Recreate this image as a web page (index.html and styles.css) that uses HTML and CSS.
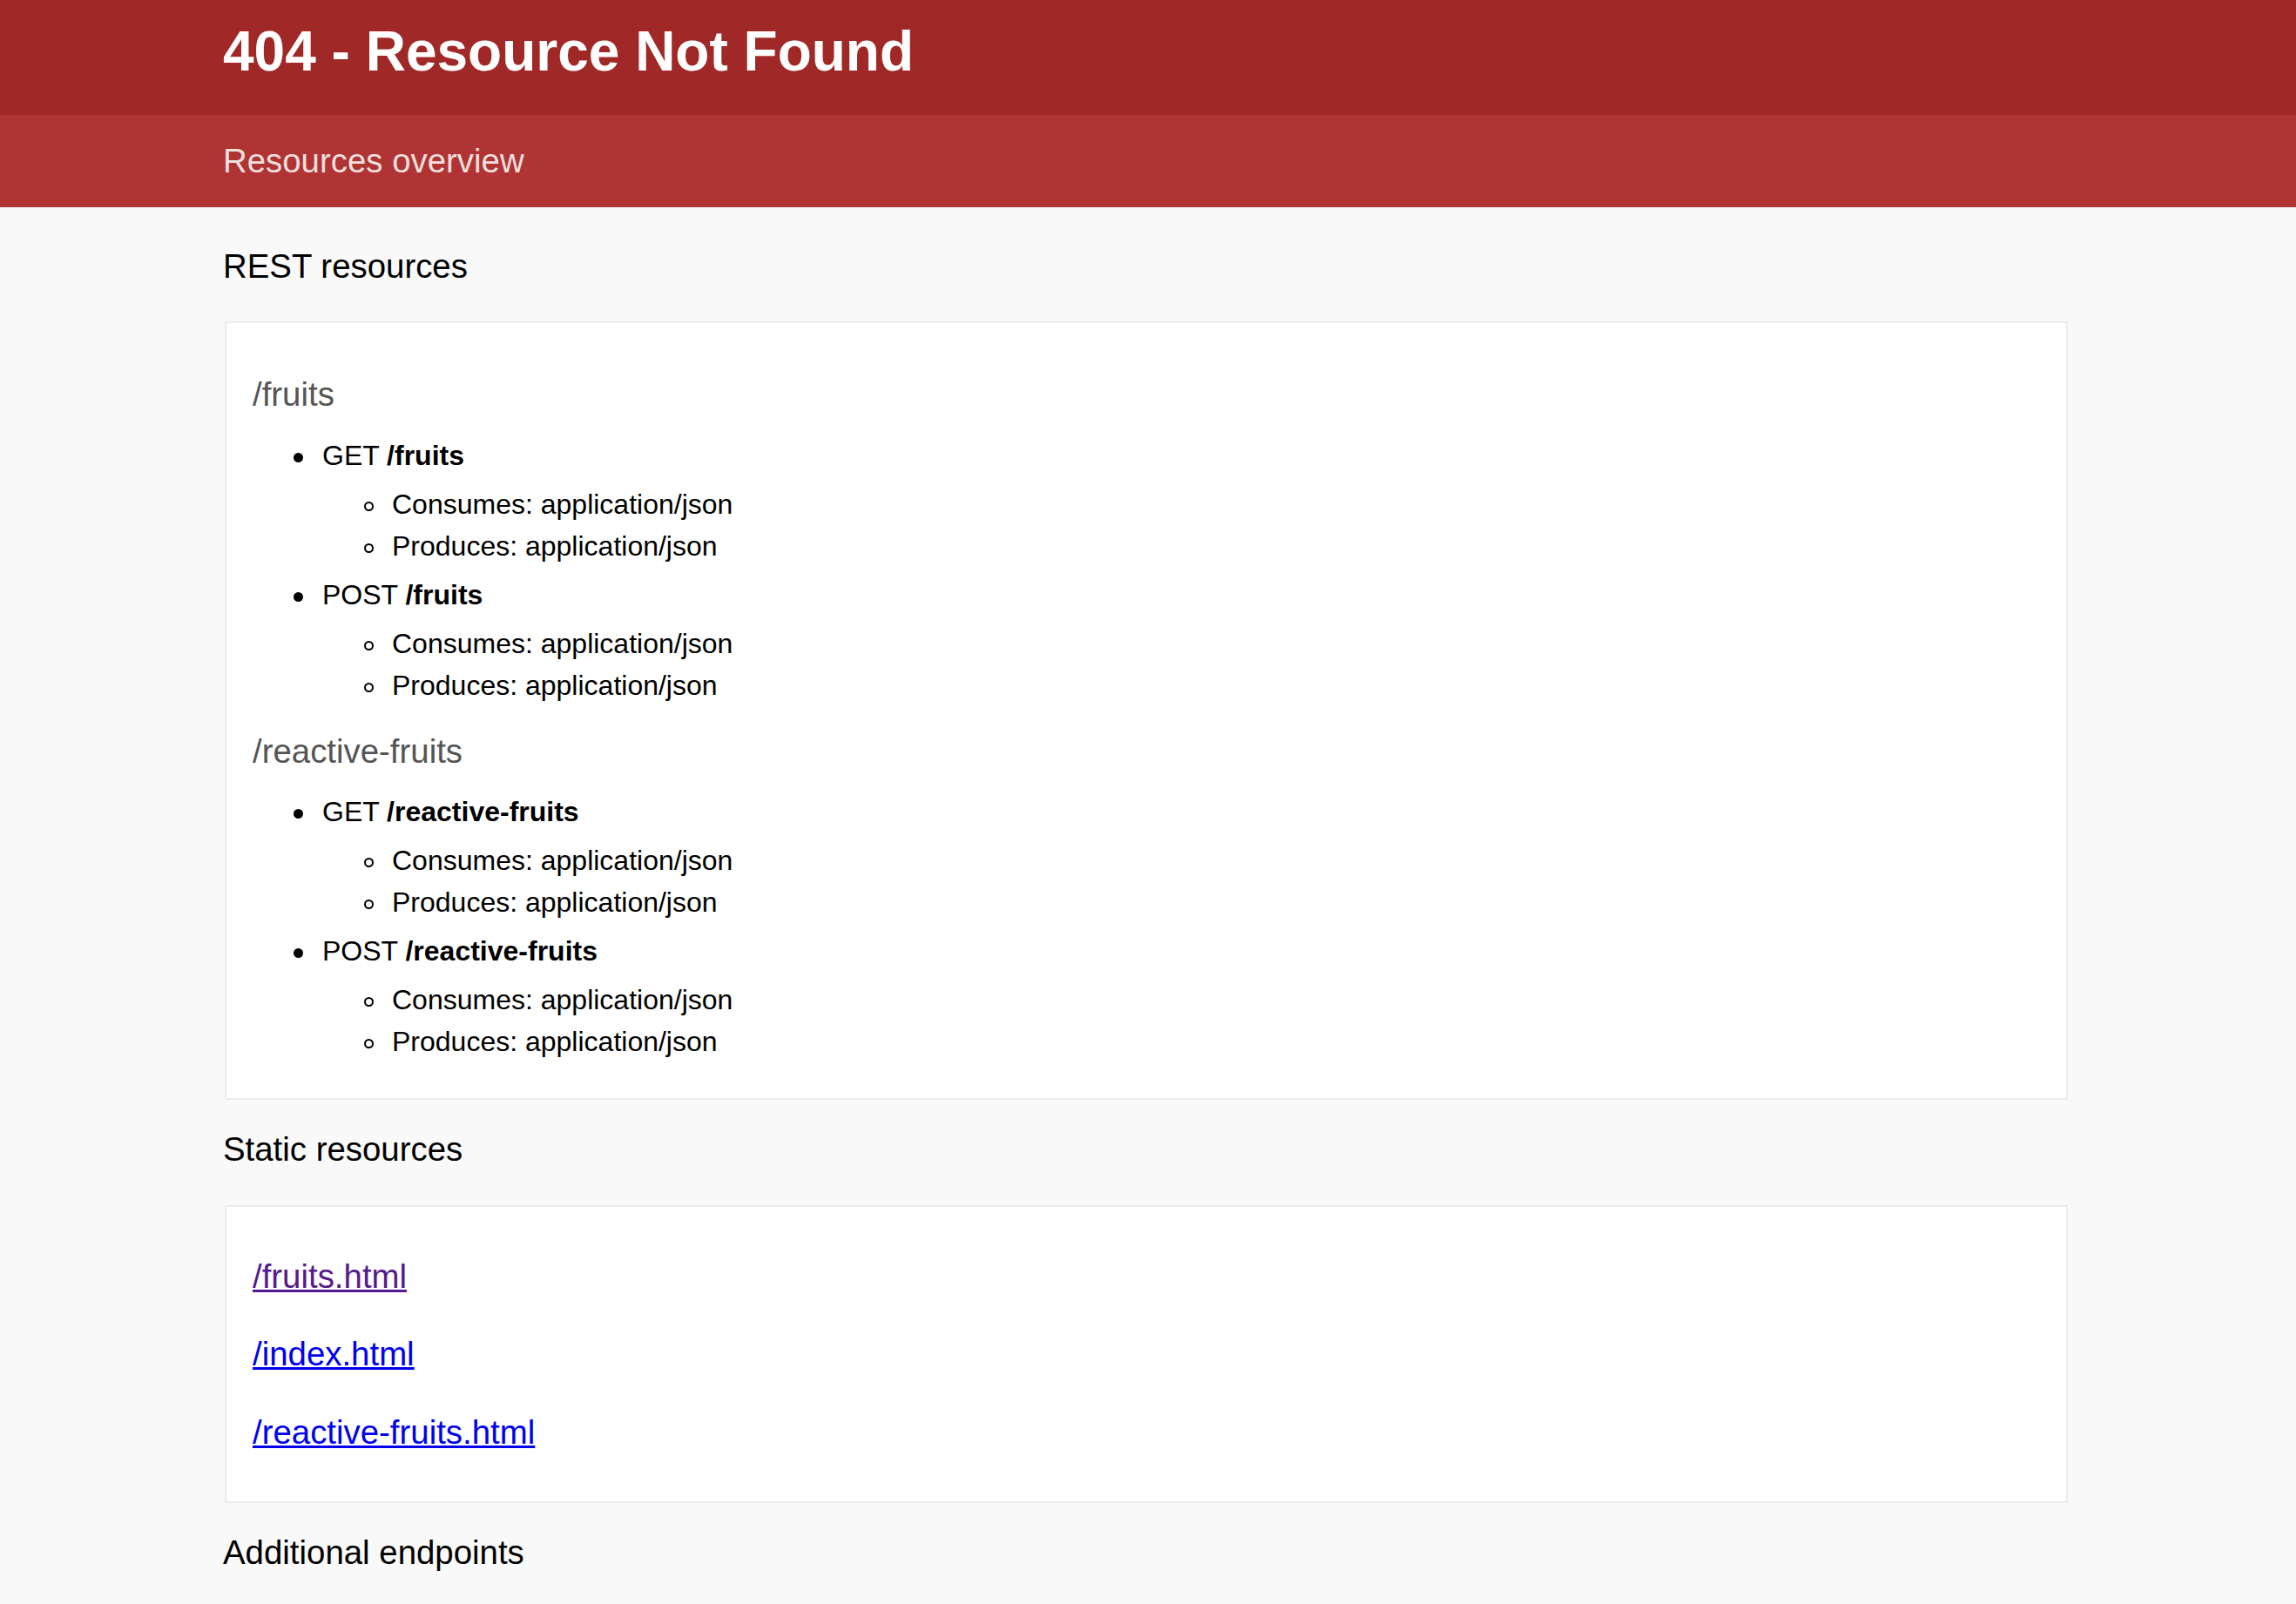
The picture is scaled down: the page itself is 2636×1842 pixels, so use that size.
FILE: index.html
```html
<!DOCTYPE html>
<html lang="en">
<head>
<meta charset="utf-8">
<title>404 - Resource Not Found</title>
<link rel="stylesheet" href="styles.css">
</head>
<body>
<header class="header">
  <div class="container">
    <h1 class="title">404 - Resource Not Found</h1>
  </div>
</header>
<div class="subheader">
  <div class="container">
    <h2 class="subtitle">Resources overview</h2>
  </div>
</div>
<main class="container content">
  <div class="section-title">REST resources</div>
  <div class="resources rest">
    <h3 class="res-path">/fruits</h3>
    <ul class="methods">
      <li>GET <strong>/fruits</strong>
        <ul class="media">
          <li>Consumes: application/json</li>
          <li>Produces: application/json</li>
        </ul>
      </li>
      <li>POST <strong>/fruits</strong>
        <ul class="media">
          <li>Consumes: application/json</li>
          <li>Produces: application/json</li>
        </ul>
      </li>
    </ul>
    <h3 class="res-path second">/reactive-fruits</h3>
    <ul class="methods">
      <li>GET <strong>/reactive-fruits</strong>
        <ul class="media">
          <li>Consumes: application/json</li>
          <li>Produces: application/json</li>
        </ul>
      </li>
      <li>POST <strong>/reactive-fruits</strong>
        <ul class="media">
          <li>Consumes: application/json</li>
          <li>Produces: application/json</li>
        </ul>
      </li>
    </ul>
  </div>
  <div class="section-title">Static resources</div>
  <div class="resources">
    <h3 class="res-path"><a class="link visited" href="#fruits">/fruits.html</a></h3>
    <h3 class="res-path"><a class="link" href="#index">/index.html</a></h3>
    <h3 class="res-path"><a class="link" href="#reactive">/reactive-fruits.html</a></h3>
  </div>
  <div class="section-title">Additional endpoints</div>
</main>
</body>
</html>
```

FILE: styles.css
```css
html, body {
  margin: 0;
  padding: 0;
}
body {
  background: #f9f9f9;
  font-family: "Liberation Sans", Arial, Helvetica, sans-serif;
  font-size: 32px;
  line-height: 1.4;
  color: #000;
}
.container {
  width: 2124px;
  margin: 0 auto;
}
.header {
  background: #a02927;
}
.title {
  margin: 0;
  padding: 27px 0 41px;
  font-size: 64px;
  line-height: 64px;
  font-weight: 700;
  color: #fff;
}
.subheader {
  background: #af3433;
}
.subtitle {
  margin: 0;
  padding: 12.8px 0;
  font-size: 38.4px;
  line-height: 80px;
  font-weight: 400;
  color: rgba(255, 255, 255, 0.85);
}
.content {
  padding: 30px 0 32px;
}
.section-title {
  font-size: 38.4px;
  line-height: 53.76px;
  font-weight: 400;
  margin: 11px 0 37px;
}
.resources {
  background: #fff;
  border: 2px solid #ececec;
  padding: 30px;
  margin: 30px 6px 30px 2px;
}
.resources.rest {
  padding-top: 32px;
  padding-bottom: 29px;
}
.res-path {
  font-size: 38.4px;
  line-height: 80px;
  font-weight: 400;
  color: #555;
  margin: 9.6px 0;
}
.res-path.second {
  margin-top: 8px;
}
.methods, .media {
  margin: 8px 0;
  padding-left: 80px;
  line-height: 48px;
  list-style: none;
}
.methods > li {
  position: relative;
  top: -4px;
}
.methods > li::before {
  content: "";
  display: inline-block;
  width: 11px;
  height: 11px;
  border-radius: 50%;
  background: #000;
  margin-left: -33px;
  margin-right: 22px;
  vertical-align: middle;
}
.media > li::before {
  content: "";
  display: inline-block;
  box-sizing: border-box;
  width: 11px;
  height: 11px;
  border: 2px solid #000;
  border-radius: 50%;
  margin-left: -32px;
  margin-right: 21px;
  vertical-align: middle;
}
.methods strong {
  font-weight: 700;
}
.link {
  color: #0000ee;
  text-decoration: underline;
}
.link.visited {
  color: #551a8b;
}
```
